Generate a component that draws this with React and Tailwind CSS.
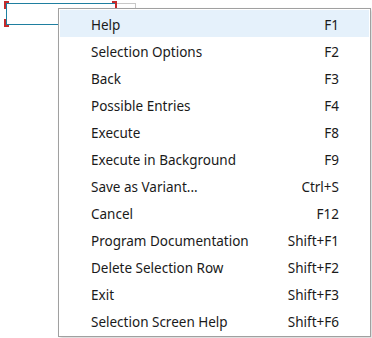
import React from "react";

const items = [
  ["Help", "F1"],
  ["Selection Options", "F2"],
  ["Back", "F3"],
  ["Possible Entries", "F4"],
  ["Execute", "F8"],
  ["Execute in Background", "F9"],
  ["Save as Variant...", "Ctrl+S"],
  ["Cancel", "F12"],
  ["Program Documentation", "Shift+F1"],
  ["Delete Selection Row", "Shift+F2"],
  ["Exit", "Shift+F3"],
  ["Selection Screen Help", "Shift+F6"],
];

export default function App() {
  return (
    <div
      className="relative w-[372px] h-[338px] bg-white overflow-hidden text-[#1a1a1a]"
      style={{ fontFamily: '"Noto Sans", "Open Sans", sans-serif' }}
    >
      <div className="flex pt-[3px] pl-[6px]">
        <div className="w-[110px] h-[22px] border border-[#1f7fa0] relative">
          <span className="absolute -left-[3px] -top-[3px] w-[5px] h-[8px] border-l-2 border-t-2 border-[#c42b2b]" />
          <span className="absolute -left-[3px] -bottom-[3px] w-[5px] h-[8px] border-l-2 border-b-2 border-[#c42b2b]" />
          <span className="absolute -right-[2px] -top-[3px] w-[5px] h-[8px] border-r-2 border-t-2 border-[#c42b2b]" />
        </div>
        <div className="w-[20px] h-[22px] border-t border-r border-[#c8c8c8]" />
      </div>
      <div className="absolute left-[58px] top-[8px] w-[313px] h-[329px] border border-[#a0a0a0] bg-white p-px shadow-[2px_2px_3px_rgba(0,0,0,0.15)]">
        {items.map(([label, key], i) => (
          <div
            key={label}
            className={`flex items-center h-[27px] pt-[4px] pl-[31px] pr-[30px] text-[13.5px] ${
              i === 0 ? "bg-[#e5f1fb]" : ""
            }`}
          >
            <span className="flex-1">{label}</span>
            <span>{key}</span>
          </div>
        ))}
      </div>
    </div>
  );
}
